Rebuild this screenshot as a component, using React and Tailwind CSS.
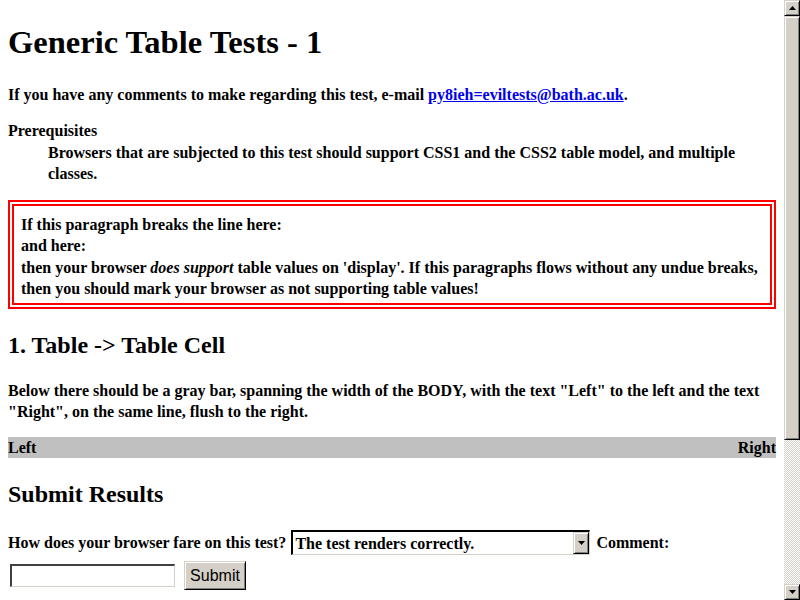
export default function App() {
  const bevel =
    "border-t border-l border-r border-b border-t-[#d4d0c8] border-l-[#d4d0c8] border-r-black border-b-black shadow-[inset_1px_1px_#ffffff,inset_-1px_-1px_#808080]";
  return (
    <div className="flex w-[800px] h-[600px] overflow-hidden bg-white text-black font-['Liberation_Serif',serif]">
      <div className="w-[784px] h-[600px] overflow-hidden px-2 font-bold text-[16px] leading-[21px]">
        <h1 className="mt-[24px] text-[32.5px] leading-[37px] font-bold">Generic Table Tests - 1</h1>
        <p className="mt-[23px]">
          If you have any comments to make regarding this test, e-mail{" "}
          <a className="text-[#0000ee] underline" href="#">py8ieh=eviltests@bath.ac.uk</a>.
        </p>
        <dl className="mt-[15px]">
          <dt>Prerequisites</dt>
          <dd className="ml-10 mt-[1px]">
            Browsers that are subjected to this test should support CSS1 and the CSS2 table model, and multiple classes.
          </dd>
        </dl>
        <div className="mt-[16px] border-[6px] border-double border-[#ff0000] pl-[7px] pr-[7px] pt-[8px] pb-[4px] leading-[21.3px]">
          If this paragraph breaks the line here:
          <br />
          and here:
          <br />
          then your browser <em>does support</em> table values on 'display'. If this paragraphs flows without any undue breaks, then you should mark your browser as not supporting table values!
        </div>
        <h2 className="mt-[22px] text-[24px] leading-[28px] font-bold">1. Table -&gt; Table Cell</h2>
        <p className="mt-[21px]">
          Below there should be a gray bar, spanning the width of the BODY, with the text "Left" to the left and the text "Right", on the same line, flush to the right.
        </p>
        <div className="mt-[15px] flex justify-between bg-[#c0c0c0] h-[21px] items-center">
          <span>Left</span>
          <span>Right</span>
        </div>
        <h2 className="mt-[22px] text-[24px] leading-[28px] font-bold">Submit Results</h2>
        <div className="mt-[22px] flex items-center h-[25px]">
          <span>How does your browser fare on this test?</span>
          <div className="ml-[5px] w-[299px] h-[25px] flex items-stretch border-t-2 border-l-2 border-t-black border-l-black border-r border-b border-r-[#d4d0c8] border-b-[#d4d0c8] bg-white">
            <span className="flex-1 pl-[2px] flex items-center">The test renders correctly.</span>
            <span className={`w-[16px] flex items-center justify-center bg-[#d4d0c8] ${bevel}`}>
              <svg width="7" height="4" viewBox="0 0 7 4"><path d="M0 0H7L3.5 4Z" fill="black" /></svg>
            </span>
          </div>
          <span className="ml-[6px]">Comment:</span>
        </div>
        <div className="mt-[6px] flex items-center h-[29px]">
          <div className="ml-[2px] w-[165px] h-[23px] bg-white border-t-2 border-l-2 border-t-[#404040] border-l-[#404040] border-r border-b border-r-[#d4d0c8] border-b-[#d4d0c8]"></div>
          <button className={`ml-[9px] w-[62px] h-[29px] bg-[#d4d0c8] font-normal text-[16px] font-['Liberation_Sans',sans-serif] ${bevel}`}>
            Submit
          </button>
        </div>
      </div>
      <div className="w-[16px] h-[600px] flex flex-col bg-[repeating-conic-gradient(#d4d0c8_0_25%,#ffffff_0_50%)] bg-[length:2px_2px]">
        <div className={`h-[16px] bg-[#d4d0c8] flex items-center justify-center ${bevel}`}>
          <svg width="7" height="4" viewBox="0 0 7 4"><path d="M0 4H7L3.5 0Z" fill="black" /></svg>
        </div>
        <div className={`h-[424px] bg-[#d4d0c8] ${bevel}`}></div>
        <div className="flex-1"></div>
        <div className={`h-[16px] bg-[#d4d0c8] flex items-center justify-center ${bevel}`}>
          <svg width="7" height="4" viewBox="0 0 7 4"><path d="M0 0H7L3.5 4Z" fill="black" /></svg>
        </div>
      </div>
    </div>
  );
}
